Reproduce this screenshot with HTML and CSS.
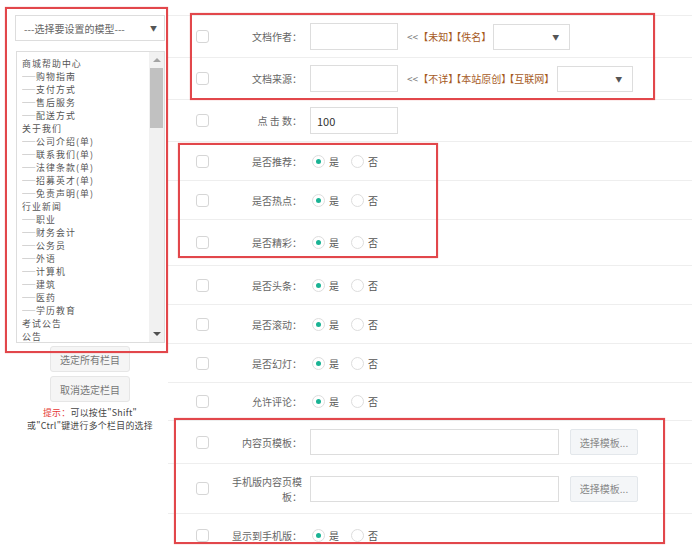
FILE: index.html
```html
<!DOCTYPE html>
<html lang="zh-CN">
<head>
    <meta charset="UTF-8">
    <meta name="viewport" content="width=device-width, initial-scale=1.0">
    <title>栏目属性设置</title>
    <link rel="stylesheet" href="styles.css">
</head>
<body>
<div class="page">
    <aside class="side">
        <div class="model-select">
            <span>---选择要设置的模型---</span>
            <span class="caret">▼</span>
        </div>
        <div class="listbox">
            <ul class="list-items">
                <li>商城帮助中心</li>
                <li><span class="dash">─</span>购物指南</li>
                <li><span class="dash">─</span>支付方式</li>
                <li><span class="dash">─</span>售后服务</li>
                <li><span class="dash">─</span>配送方式</li>
                <li>关于我们</li>
                <li><span class="dash">─</span>公司介绍(单)</li>
                <li><span class="dash">─</span>联系我们(单)</li>
                <li><span class="dash">─</span>法律条款(单)</li>
                <li><span class="dash">─</span>招募英才(单)</li>
                <li><span class="dash">─</span>免责声明(单)</li>
                <li>行业新闻</li>
                <li><span class="dash">─</span>职业</li>
                <li><span class="dash">─</span>财务会计</li>
                <li><span class="dash">─</span>公务员</li>
                <li><span class="dash">─</span>外语</li>
                <li><span class="dash">─</span>计算机</li>
                <li><span class="dash">─</span>建筑</li>
                <li><span class="dash">─</span>医药</li>
                <li><span class="dash">─</span>学历教育</li>
                <li>考试公告</li>
                <li>公告</li>
            </ul>
            <div class="scrollbar">
                <span class="arrow arrow-up"></span>
                <span class="thumb"></span>
                <span class="track"></span>
                <span class="arrow arrow-down"></span>
            </div>
        </div>
        <button class="btn">选定所有栏目</button>
        <button class="btn">取消选定栏目</button>
        <p class="tip"><em>提示：</em>可以按住"Shift"<br>或"Ctrl"键进行多个栏目的选择</p>
    </aside>

    <div class="form-table">
        <div class="row row-md">
            <div class="chk-cell"><span class="checkbox"></span></div>
            <div class="label">文档作者：</div>
            <div class="input short"></div>
            <div class="links">&lt;&lt; <a>【未知】</a><a>【佚名】</a></div>
            <div class="select sel-author"><span class="caret">▼</span></div>
        </div>
        <div class="row row-md">
            <div class="chk-cell"><span class="checkbox"></span></div>
            <div class="label">文档来源：</div>
            <div class="input short"></div>
            <div class="links">&lt;&lt; <a>【不详】</a><a>【本站原创】</a><a>【互联网】</a></div>
            <div class="select sel-source"><span class="caret">▼</span></div>
        </div>
        <div class="row row-md">
            <div class="chk-cell"><span class="checkbox"></span></div>
            <div class="label">点 击 数：</div>
            <div class="input short">100</div>
        </div>
        <div class="row">
            <div class="chk-cell"><span class="checkbox"></span></div>
            <div class="label">是否推荐：</div>
            <div class="radios"><span class="radio on"></span>是<span class="radio"></span>否</div>
        </div>
        <div class="row">
            <div class="chk-cell"><span class="checkbox"></span></div>
            <div class="label">是否热点：</div>
            <div class="radios"><span class="radio on"></span>是<span class="radio"></span>否</div>
        </div>
        <div class="row row-lg">
            <div class="chk-cell"><span class="checkbox"></span></div>
            <div class="label">是否精彩：</div>
            <div class="radios"><span class="radio on"></span>是<span class="radio"></span>否</div>
        </div>
        <div class="row">
            <div class="chk-cell"><span class="checkbox"></span></div>
            <div class="label">是否头条：</div>
            <div class="radios"><span class="radio on"></span>是<span class="radio"></span>否</div>
        </div>
        <div class="row">
            <div class="chk-cell"><span class="checkbox"></span></div>
            <div class="label">是否滚动：</div>
            <div class="radios"><span class="radio on"></span>是<span class="radio"></span>否</div>
        </div>
        <div class="row">
            <div class="chk-cell"><span class="checkbox"></span></div>
            <div class="label">是否幻灯：</div>
            <div class="radios"><span class="radio on"></span>是<span class="radio"></span>否</div>
        </div>
        <div class="row row-sm">
            <div class="chk-cell"><span class="checkbox"></span></div>
            <div class="label">允许评论：</div>
            <div class="radios"><span class="radio on"></span>是<span class="radio"></span>否</div>
        </div>
        <div class="row row-tpl">
            <div class="chk-cell"><span class="checkbox"></span></div>
            <div class="label">内容页模板：</div>
            <div class="input long"></div>
            <button class="btn-pick">选择模板...</button>
        </div>
        <div class="row row-xl">
            <div class="chk-cell"><span class="checkbox"></span></div>
            <div class="label">手机版内容页模板：</div>
            <div class="input long"></div>
            <button class="btn-pick">选择模板...</button>
        </div>
        <div class="row row-tpl">
            <div class="chk-cell"><span class="checkbox"></span></div>
            <div class="label">显示到手机版：</div>
            <div class="radios"><span class="radio on"></span>是<span class="radio"></span>否</div>
        </div>
    </div>

    <!-- annotation boxes drawn over the screenshot -->
    <div class="mark mark-side"></div>
    <div class="mark mark-author"></div>
    <div class="mark mark-flags"></div>
    <div class="mark mark-tpl"></div>
</div>
</body>
</html>
```

FILE: styles.css
```css
* {
    box-sizing: border-box;
}
body {
    margin: 0;
    background-color: #fff;
    color: #666;
    font-family: "Noto Sans CJK SC", "Noto Sans", sans-serif;
    font-size: 10px;
}
.page {
    position: relative;
    display: flex;
    width: 692px;
    height: 556px;
    overflow: hidden;
}

/* left column */
.side {
    width: 168px;
    flex-shrink: 0;
    padding: 15px 3px 0 15px;
    text-align: center;
}
.model-select {
    display: flex;
    justify-content: space-between;
    align-items: center;
    height: 26px;
    padding: 0 7px 0 8px;
    border: 1px solid #ddd;
    color: #666;
}
.caret {
    font-size: 7px;
    color: #555;
}
.listbox {
    display: flex;
    height: 292px;
    margin: 10px 0 0 1px;
    border: 1px solid #ddd;
    overflow: hidden;
    text-align: left;
}
.list-items {
    flex: 1;
    list-style: none;
    margin: 0;
    padding: 5px 0 0 5px;
    color: #555;
    font-size: 8.9px;
    letter-spacing: 1.1px;
    line-height: 13px;
}
.dash {
    display: inline-block;
    width: 14px;
    letter-spacing: 0;
    transform: scaleX(1.5);
    transform-origin: left center;
}
.scrollbar {
    display: flex;
    flex-direction: column;
    width: 15px;
    background-color: #f1f1f1;
}
.arrow {
    display: flex;
    justify-content: center;
    align-items: center;
    height: 16px;
}
.arrow::before {
    content: "";
    border-left: 4px solid transparent;
    border-right: 4px solid transparent;
}
.arrow-up::before {
    border-bottom: 4px solid #a3a3a3;
}
.arrow-down::before {
    border-top: 4px solid #505050;
}
.thumb {
    height: 60px;
    margin: 0 1px;
    background-color: #c1c1c1;
}
.track {
    flex: 1;
}
.btn {
    display: block;
    width: 80px;
    height: 26px;
    margin: 3px auto 0;
    border: 1px solid #e6e6e6;
    border-radius: 3px;
    background-color: #f5f5f5;
    color: #777;
    font-family: inherit;
    font-size: 10px;
}
.btn + .btn {
    margin-top: 4px;
}
.tip {
    margin: 4px 0 0;
    line-height: 13px;
    color: #444;
    font-size: 8.9px;
    letter-spacing: 0.3px;
}
.tip em {
    font-style: normal;
    color: #e53935;
}

/* right form */
.form-table {
    flex: 1;
    margin-top: 15px;
}
.row {
    display: flex;
    align-items: center;
    height: 39px;
    border-top: 1px solid #eee;
}
.row-sm { height: 38px; }
.row-md { height: 42px; }
.row-tpl { height: 43px; }
.row-lg { height: 46px; }
.row-xl { height: 50px; }
.chk-cell {
    width: 62px;
    flex-shrink: 0;
    padding-left: 28px;
    display: flex;
}
.checkbox {
    width: 13px;
    height: 13px;
    border: 1px solid #d6d6d6;
    border-radius: 3px;
}
.label {
    width: 72px;
    flex-shrink: 0;
    text-align: right;
    line-height: 15px;
    color: #666;
}
.input {
    display: flex;
    align-items: center;
    height: 27px;
    margin-left: 8px;
    padding-left: 6px;
    border: 1px solid #ddd;
    color: #333;
    font-size: 11px;
}
.input.short {
    width: 88px;
}
.input.long {
    width: 249px;
    height: 26px;
}
.links {
    margin-left: 9px;
    color: #777;
    font-feature-settings: "halt";
}
.links a {
    margin-left: 3px;
    color: #a65a1e;
}
.select {
    display: flex;
    justify-content: flex-end;
    align-items: center;
    height: 26px;
    padding-right: 10px;
    border: 1px solid #ddd;
}
.sel-author {
    width: 77px;
    margin-left: 7px;
}
.sel-source {
    width: 76px;
    margin-left: 8px;
}
.radios {
    display: flex;
    align-items: center;
    margin-left: 10px;
    color: #555;
}
.radio {
    position: relative;
    width: 13px;
    height: 13px;
    margin-right: 4px;
    border: 1px solid #ddd;
    border-radius: 50%;
}
.radios .radio:last-of-type {
    margin-left: 12px;
}
.radios .radio.on {
    margin-left: 0;
}
.radio.on::after {
    content: "";
    position: absolute;
    top: 3px;
    left: 3px;
    width: 5px;
    height: 5px;
    border-radius: 50%;
    background-color: #1ab394;
}
.btn-pick {
    width: 68px;
    height: 26px;
    margin-left: 11px;
    border: 1px solid #e3e7eb;
    border-radius: 2px;
    background-color: #f4f6f8;
    color: #888;
    font-family: inherit;
    font-size: 10px;
}

/* red annotation boxes */
.mark {
    position: absolute;
    border: 2px solid #e2474b;
    box-shadow: 0 0 1px rgba(226, 71, 75, 0.6);
    pointer-events: none;
}
.mark-side {
    left: 5px;
    top: 7px;
    width: 163px;
    height: 346px;
}
.mark-author {
    left: 190px;
    top: 13px;
    width: 465px;
    height: 87px;
}
.mark-flags {
    left: 178px;
    top: 143px;
    width: 260px;
    height: 115px;
}
.mark-tpl {
    left: 174px;
    top: 418px;
    width: 491px;
    height: 126px;
}
```
